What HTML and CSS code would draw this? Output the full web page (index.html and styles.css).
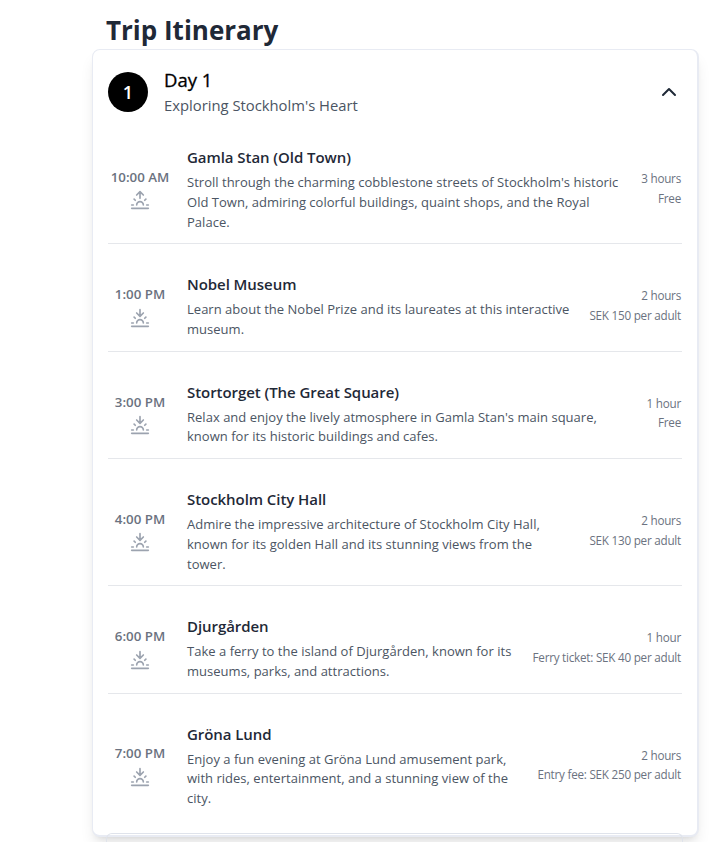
FILE: index.html
```html
<!DOCTYPE html>
<html lang="en">
<head>
<meta charset="utf-8">
<title>Trip Itinerary</title>
<link rel="stylesheet" href="styles.css">
</head>
<body>
<svg class="defs" width="0" height="0">
  <symbol id="sunrise" viewBox="0 0 24 24"><path d="M12 2v8m-7.07.93 1.41 1.41M2 18h2m16 0h2m-2.93-7.07-1.41 1.41M22 22H2M8 6l4-4 4 4M16 18a4 4 0 0 0-8 0"/></symbol>
  <symbol id="sunset" viewBox="0 0 24 24"><path d="M12 10V2m-7.07 8.93 1.41 1.41M2 18h2m16 0h2m-2.93-7.07-1.41 1.41M22 22H2M16 6l-4 4-4-4M16 18a4 4 0 0 0-8 0"/></symbol>
</svg>
<main class="page">
  <h1 class="heading">Trip Itinerary</h1>
  <section class="card">
    <header class="day">
      <span class="badge">1</span>
      <div class="day-text">
        <h2 class="day-title">Day 1</h2>
        <p class="day-sub">Exploring Stockholm's Heart</p>
      </div>
      <svg class="chevron" viewBox="0 0 24 24"><path d="m18 15-6-6-6 6"/></svg>
    </header>
    <article class="item">
      <div class="when"><span class="time">10:00 AM</span><svg class="icon"><use href="#sunrise"/></svg></div>
      <div class="body"><h3 class="title">Gamla Stan (Old Town)</h3><p class="desc">Stroll through the charming cobblestone streets of Stockholm's historic<br>Old Town, admiring colorful buildings, quaint shops, and the Royal<br>Palace.</p></div>
      <div class="meta"><p>3 hours</p><p>Free</p></div>
    </article>
    <article class="item">
      <div class="when"><span class="time">1:00 PM</span><svg class="icon"><use href="#sunset"/></svg></div>
      <div class="body"><h3 class="title">Nobel Museum</h3><p class="desc">Learn about the Nobel Prize and its laureates at this interactive<br>museum.</p></div>
      <div class="meta"><p>2 hours</p><p>SEK 150 per adult</p></div>
    </article>
    <article class="item">
      <div class="when"><span class="time">3:00 PM</span><svg class="icon"><use href="#sunset"/></svg></div>
      <div class="body"><h3 class="title">Stortorget (The Great Square)</h3><p class="desc">Relax and enjoy the lively atmosphere in Gamla Stan's main square,<br>known for its historic buildings and cafes.</p></div>
      <div class="meta"><p>1 hour</p><p>Free</p></div>
    </article>
    <article class="item">
      <div class="when"><span class="time">4:00 PM</span><svg class="icon"><use href="#sunset"/></svg></div>
      <div class="body"><h3 class="title">Stockholm City Hall</h3><p class="desc">Admire the impressive architecture of Stockholm City Hall,<br>known for its golden Hall and its stunning views from the<br>tower.</p></div>
      <div class="meta"><p>2 hours</p><p>SEK 130 per adult</p></div>
    </article>
    <article class="item">
      <div class="when"><span class="time">6:00 PM</span><svg class="icon"><use href="#sunset"/></svg></div>
      <div class="body"><h3 class="title">Djurgården</h3><p class="desc">Take a ferry to the island of Djurgården, known for its<br>museums, parks, and attractions.</p></div>
      <div class="meta"><p>1 hour</p><p>Ferry ticket: SEK 40 per adult</p></div>
    </article>
    <article class="item">
      <div class="when"><span class="time">7:00 PM</span><svg class="icon"><use href="#sunset"/></svg></div>
      <div class="body"><h3 class="title">Gröna Lund</h3><p class="desc">Enjoy a fun evening at Gröna Lund amusement park,<br>with rides, entertainment, and a stunning view of the<br>city.</p></div>
      <div class="meta"><p>2 hours</p><p>Entry fee: SEK 250 per adult</p></div>
    </article>
  </section>
  <div class="next-card"></div>
</main>
</body>
</html>
```
FILE: styles.css
```css
* { box-sizing: border-box; margin: 0; padding: 0; }
body { background: #fff; font-family: "Open Sans", "Noto Sans", sans-serif; }
.defs { position: absolute; }
.page { width: 607px; margin-left: 92px; padding-top: 13px; }
.heading { height: 36px; padding-left: 14px; font-size: 26px; line-height: 35px; font-weight: 700; color: #1f2937; white-space: nowrap; }
.card { height: 788px; padding: 0 15px; border: 1px solid #e8ebf3; border-width: 1px 2px 2px 1px; border-radius: 8px; background: #fff; box-shadow: 0 10px 15px -3px rgba(0,0,0,.1), 0 4px 6px -4px rgba(0,0,0,.1); }
.day { display: flex; align-items: center; height: 83px; }
.badge { width: 40px; height: 40px; border-radius: 50%; background: #000; color: #fff; font-size: 18px; line-height: 40px; font-weight: 600; text-align: center; }
.day-text { flex: 1; margin-left: 16px; }
.day-title { font-size: 18.5px; line-height: 27px; font-weight: 500; color: #000; -webkit-text-stroke: .3px #000; }
.day-sub { font-size: 14.8px; line-height: 24px; color: #4b5563; }
.chevron { width: 24px; height: 24px; margin-right: 1px; fill: none; stroke: #1f2937; stroke-width: 2; stroke-linecap: round; stroke-linejoin: round; }
.item { display: flex; align-items: center; margin-bottom: 27.8px; padding-bottom: 11px; border-bottom: 1px solid #e5e7eb; }
.day + .item { margin-top: 12px; }
.item:last-child { border-bottom: 0; margin-bottom: 0; }
.when { display: flex; flex-direction: column; align-items: center; width: 64px; gap: 3.5px; }
.time { font-size: 13.3px; line-height: 20px; font-weight: 600; color: #6b7280; white-space: nowrap; }
.icon { width: 20px; height: 20px; fill: none; stroke: #9ca3af; stroke-width: 2; stroke-linecap: round; stroke-linejoin: round; }
.body { flex: 1; margin-left: 15px; white-space: nowrap; }
.title { height: 28px; font-size: 15px; line-height: 24px; font-weight: 600; letter-spacing: -.06px; color: #1f2937; }
.desc { font-size: 13px; line-height: 19.8px; letter-spacing: .02px; color: #4b5563; }
.meta { padding-right: 1px; font-size: 11.7px; line-height: 19.6px; letter-spacing: -.24px; color: #6b7280; text-align: right; white-space: nowrap; }
.next-card { position: relative; width: 577px; height: 9px; margin: -4px 0 0 14px; border: 1px solid #dfe3eb; border-bottom: 0; border-radius: 6px 6px 0 0; }
```
